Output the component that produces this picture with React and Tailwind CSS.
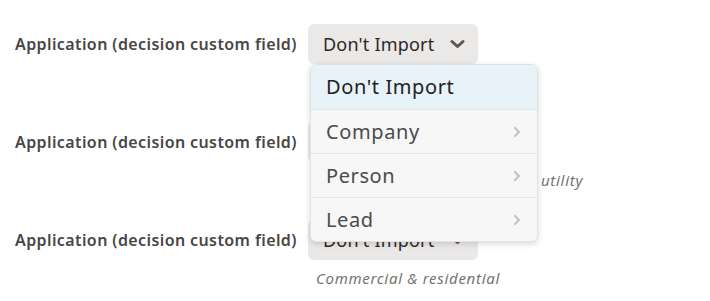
import React from "react";

const rows = [
  { label: "Application (decision custom field)", value: "Don't Import", help: "Software & IT services" },
  { label: "Application (decision custom field)", value: "Don't Import", help: "Government, nonprofit, public utility" },
  { label: "Application (decision custom field)", value: "Don't Import", help: "Commercial & residential" },
];

const options = [
  { name: "Don't Import", active: true },
  { name: "Company", sub: true },
  { name: "Person", sub: true },
  { name: "Lead", sub: true },
];

function ChevronDown() {
  return (
    <svg width="15" height="10" viewBox="0 0 15 10" className="text-[#5b5754]">
      <path d="M2 2.5 L7.5 7.5 L13 2.5" fill="none" stroke="currentColor" strokeWidth="3" strokeLinecap="round" strokeLinejoin="round" />
    </svg>
  );
}

function ChevronRight() {
  return (
    <svg width="8" height="12" viewBox="0 0 8 12" className="text-[#c4c4c4]">
      <path d="M2 2 L6 6 L2 10" fill="none" stroke="currentColor" strokeWidth="2.2" strokeLinecap="round" strokeLinejoin="round" />
    </svg>
  );
}

function Menu() {
  return (
    <div className="absolute left-[2px] top-[40px] w-[228px] bg-[#f7f7f7] border border-[#e2e2e2] rounded-md shadow-[0_2px_6px_rgba(0,0,0,0.15)] overflow-hidden z-10">
      {options.map((o, i) => (
        <div
          key={o.name}
          className={`flex items-center justify-between h-[44px] pl-[15px] pr-[16px] ${i > 0 ? "border-t border-[#e6e6e6]" : ""} ${o.active ? "bg-[#e7f3f9] text-[#222]" : "text-[#4b4b4b]"}`}
        >
          <span className="text-[20px] tracking-[0.6px]">{o.name}</span>
          {o.sub && <ChevronRight />}
        </div>
      ))}
    </div>
  );
}

export default function App() {
  return (
    <div className="w-[710px] h-[301px] bg-white pt-[24px] pl-[15px] font-['Noto_Sans',sans-serif] overflow-hidden">
      {rows.map((r, i) => (
        <div key={i} className="flex items-start mb-[30px]">
          <div className="w-[293px] h-[40px] flex items-center text-[16px] tracking-[0.4px] font-semibold text-[#4a4643]">
            {r.label}
          </div>
          <div className="relative">
            <div className="inline-flex items-center h-[40px] pl-[15px] pr-[13px] gap-[16px] bg-[#ebe8e8] rounded-md text-[18px] tracking-[0.2px] text-[#2b2826]">
              <span>{r.value}</span>
              <ChevronDown />
            </div>
            <div className="mt-[8px] pl-[8px] h-[20px] flex items-center text-[15px] tracking-[0.7px] italic text-[#757370] whitespace-nowrap">{r.help}</div>
            {i === 0 && <Menu />}
          </div>
        </div>
      ))}
    </div>
  );
}
